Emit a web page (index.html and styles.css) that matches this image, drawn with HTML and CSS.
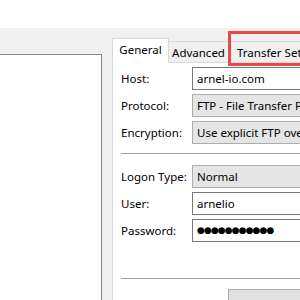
FILE: index.html
```html
<!DOCTYPE html>
<html lang="en">
<head>
    <meta charset="UTF-8" />
    <title>Site Manager</title>
    <link rel="stylesheet" href="styles.css">
</head>
<body>
    <div class="topbar"></div>

    <div class="main">
        <div class="site-list"></div>

        <div class="tab-control">
            <div class="tab-strip">
                <div class="tab active">General</div>
                <div class="tab">Advanced</div>
                <div class="tab marked">Transfer Settings</div>
            </div>

            <div class="tab-page">
                <div class="row"><label>Host:</label><div class="field">arnel-io.com</div></div>
                <div class="row"><label>Protocol:</label><div class="field combo">FTP - File Transfer Protocol</div></div>
                <div class="row"><label>Encryption:</label><div class="field combo">Use explicit FTP over TLS if available</div></div>

                <hr class="sep">

                <div class="row"><label>Logon Type:</label><div class="field combo">Normal</div></div>
                <div class="row"><label>User:</label><div class="field">arnelio</div></div>
                <div class="row"><label>Password:</label><div class="field password">●●●●●●●●●●●</div></div>

                <hr class="sep sep-bottom">

                <div class="button-row"><div class="button"></div></div>
            </div>
        </div>
    </div>
</body>
</html>
```

FILE: styles.css
```css
/* Basic reset */
* {
    margin: 0;
    padding: 0;
    box-sizing: border-box;
}

body {
    font-family: "Noto Sans", sans-serif;
    font-size: 11.5px;
    color: #000;
    background-color: #f0f0f0;
    width: 300px;
    height: 300px;
    overflow: hidden;
}

/* White strip above the dialog body */
.topbar {
    height: 28px;
    background-color: #fff;
}

.main {
    display: flex;
    height: 272px;
}

/* Site tree on the left */
.site-list {
    flex: none;
    width: 102px;
    margin-top: 26px;
    background-color: #fff;
    border-top: 1px solid #828790;
    border-right: 1px solid #828790;
}

/* Tab control */
.tab-control {
    flex: none;
    width: 260px;
    margin-left: 10px;
    margin-top: 10px;
    display: flex;
    flex-direction: column;
}

.tab-strip {
    display: flex;
    align-items: flex-end;
    height: 24px;
}

.tab {
    height: 21px;
    width: 61px;
    margin-left: -1px;
    border: 1px solid #d9d9d9;
    border-bottom: none;
    background-color: #f0f0f0;
    line-height: 21px;
    text-align: center;
    white-space: nowrap;
}

.tab.active {
    width: 57px;
    height: 25px;
    margin-left: 0;
    margin-bottom: -1px;
    background-color: #fff;
    line-height: 22px;
    position: relative;
    z-index: 1;
}

.tab.marked {
    width: 110px;
    text-align: left;
    padding-left: 8px;
    position: relative;
}

/* Red highlight drawn over the tab */
.tab.marked::after {
    content: "";
    position: absolute;
    top: -11px;
    left: -1px;
    right: -10px;
    bottom: -4px;
    border: 3px solid #e8494b;
}

.tab-page {
    flex: 1;
    background-color: #fff;
    border: 1px solid #d9d9d9;
    padding: 4px 0 0 8px;
}

.row {
    display: flex;
    align-items: center;
    height: 23px;
    margin-bottom: 4px;
}

.row label {
    width: 71px;
    flex: none;
}

.field {
    flex: 1;
    height: 23px;
    border: 1px solid #7a7a7a;
    background-color: #fff;
    padding-left: 4px;
    line-height: 21px;
    white-space: nowrap;
    overflow: hidden;
}

.field.combo {
    background-color: #e5e5e5;
    border-color: #adadad;
}

.field.password {
    font-family: "DejaVu Sans", sans-serif;
    font-size: 9px;
    letter-spacing: -0.9px;
    line-height: 21px;
}

.sep {
    border: none;
    border-top: 1px solid #a0a0a0;
    margin: 9px 0 11px;
}

.sep-bottom {
    margin: 36px 0 10px;
}

.button-row {
    display: flex;
    padding-left: 107px;
}

.button {
    width: 80px;
    height: 23px;
    background-color: #e1e1e1;
    border: 1px solid #adadad;
}
```
